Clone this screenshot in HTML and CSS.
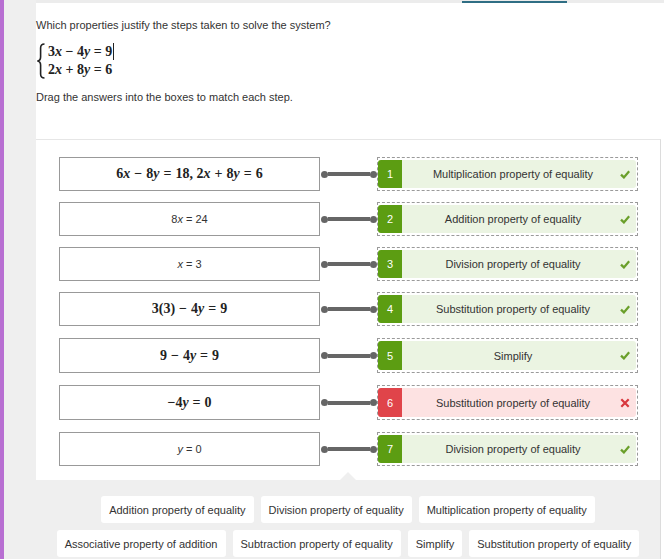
FILE: index.html
```html
<!DOCTYPE html>
<html lang="en">
<head>
<meta charset="utf-8">
<title>Properties</title>
<link rel="stylesheet" href="styles.css">
</head>
<body>
<div class="page">
  <div class="rail"></div>
  <div class="gutter"></div>
  <div class="main">
    <div class="topbar"><div class="tab"></div></div>
    <section class="question">
      <p class="prompt">Which properties justify the steps taken to solve the system?</p>
      <div class="system">
        <svg class="brace" width="10" height="36" viewBox="0 0 10 36"><path d="M8.5 1 C5.5 1 4.6 2.6 4.6 5 L4.6 14 C4.6 16.4 3.6 17.8 1.3 18 C3.6 18.2 4.6 19.6 4.6 22 L4.6 31 C4.6 33.4 5.5 35 8.5 35" fill="none" stroke="#222" stroke-width="1.6"/></svg>
        <div class="system-lines">
          <div>3<i>x</i> − 4<i>y</i> = 9<span class="caret"></span></div>
          <div>2<i>x</i> + 8<i>y</i> = 6</div>
        </div>
      </div>
      <p class="instruction">Drag the answers into the boxes to match each step.</p>
    </section>
    <section class="panel">
      <div class="matches">
        <div class="row">
          <div class="step"><span class="math">6<i>x</i><span class="op">−</span>8<i>y</i><span class="op">=</span>18, 2<i>x</i><span class="op">+</span>8<i>y</i><span class="op">=</span>6</span></div>
          <div class="connector"><span class="dot"></span><span class="wire"></span><span class="dot"></span></div>
          <div class="drop"><div class="card"><span class="num">1</span><span class="label">Multiplication property of equality</span><svg class="mark" width="10" height="9" viewBox="0 0 10 9"><path d="M1 4.6 L3.9 7.4 L9.2 1.2" fill="none" stroke="#6a9f2a" stroke-width="2.3"/></svg></div></div>
        </div>
        <div class="row">
          <div class="step"><span>8<i>x</i> = 24</span></div>
          <div class="connector"><span class="dot"></span><span class="wire"></span><span class="dot"></span></div>
          <div class="drop"><div class="card"><span class="num">2</span><span class="label">Addition property of equality</span><svg class="mark" width="10" height="9" viewBox="0 0 10 9"><path d="M1 4.6 L3.9 7.4 L9.2 1.2" fill="none" stroke="#6a9f2a" stroke-width="2.3"/></svg></div></div>
        </div>
        <div class="row">
          <div class="step"><span><i>x</i> = 3</span></div>
          <div class="connector"><span class="dot"></span><span class="wire"></span><span class="dot"></span></div>
          <div class="drop"><div class="card"><span class="num">3</span><span class="label">Division property of equality</span><svg class="mark" width="10" height="9" viewBox="0 0 10 9"><path d="M1 4.6 L3.9 7.4 L9.2 1.2" fill="none" stroke="#6a9f2a" stroke-width="2.3"/></svg></div></div>
        </div>
        <div class="row">
          <div class="step"><span class="math">3(3)<span class="op">−</span>4<i>y</i><span class="op">=</span>9</span></div>
          <div class="connector"><span class="dot"></span><span class="wire"></span><span class="dot"></span></div>
          <div class="drop"><div class="card"><span class="num">4</span><span class="label">Substitution property of equality</span><svg class="mark" width="10" height="9" viewBox="0 0 10 9"><path d="M1 4.6 L3.9 7.4 L9.2 1.2" fill="none" stroke="#6a9f2a" stroke-width="2.3"/></svg></div></div>
        </div>
        <div class="row row--tall row--loose">
          <div class="step"><span class="math">9<span class="op">−</span>4<i>y</i><span class="op">=</span>9</span></div>
          <div class="connector"><span class="dot"></span><span class="wire"></span><span class="dot"></span></div>
          <div class="drop"><div class="card"><span class="num">5</span><span class="label">Simplify</span><svg class="mark" width="10" height="9" viewBox="0 0 10 9"><path d="M1 4.6 L3.9 7.4 L9.2 1.2" fill="none" stroke="#6a9f2a" stroke-width="2.3"/></svg></div></div>
        </div>
        <div class="row row--tall row--loose">
          <div class="step"><span class="math">−4<i>y</i><span class="op">=</span>0</span></div>
          <div class="connector"><span class="dot"></span><span class="wire"></span><span class="dot"></span></div>
          <div class="drop"><div class="card card--wrong"><span class="num">6</span><span class="label">Substitution property of equality</span><svg class="mark" width="10" height="10" viewBox="0 0 10 10"><path d="M1.3 1.3 L8.7 8.7 M8.7 1.3 L1.3 8.7" fill="none" stroke="#d8373d" stroke-width="2.2"/></svg></div></div>
        </div>
        <div class="row row--loose">
          <div class="step"><span><i>y</i> = 0</span></div>
          <div class="connector"><span class="dot"></span><span class="wire"></span><span class="dot"></span></div>
          <div class="drop"><div class="card"><span class="num">7</span><span class="label">Division property of equality</span><svg class="mark" width="10" height="9" viewBox="0 0 10 9"><path d="M1 4.6 L3.9 7.4 L9.2 1.2" fill="none" stroke="#6a9f2a" stroke-width="2.3"/></svg></div></div>
        </div>
      </div>
      <div class="bank">
        <span class="tile">Addition property of equality</span>
        <span class="tile">Division property of equality</span>
        <span class="tile">Multiplication property of equality</span>
        <span class="tile">Associative property of addition</span>
        <span class="tile">Subtraction property of equality</span>
        <span class="tile">Simplify</span>
        <span class="tile">Substitution property of equality</span>
      </div>
    </section>
  </div>
</div>
</body>
</html>
```
FILE: styles.css
```css
html, body {
  margin: 0;
  padding: 0;
}
body {
  background: #ffffff;
  color: #333333;
  font-family: "Liberation Sans", Arial, sans-serif;
  font-size: 11px;
}
.page {
  display: flex;
  height: 559px;
  overflow: hidden;
}
.rail {
  width: 4px;
  flex-shrink: 0;
  background: #b86fd2;
}
.gutter {
  width: 32px;
  flex-shrink: 0;
  background: #efefef;
}
.main {
  flex: 1;
  display: flex;
  flex-direction: column;
  min-width: 0;
}
.topbar {
  height: 3px;
  flex-shrink: 0;
  display: flex;
  background: #ececec;
}
.tab {
  margin-left: 426px;
  width: 105px;
  height: 2px;
  margin-top: 1px;
  background: #2f6e84;
}
.question {
  height: 136px;
  flex-shrink: 0;
  box-sizing: border-box;
  padding-top: 16px;
}
.prompt {
  margin: 0;
  line-height: 13px;
}
.system {
  display: flex;
  align-items: center;
  margin-top: 11px;
}
.brace {
  margin-right: 2px;
  flex-shrink: 0;
}
.system-lines {
  font-family: "Liberation Serif", "Times New Roman", serif;
  font-weight: bold;
  font-size: 14px;
  line-height: 18px;
  color: #222;
}
.system-lines i, .math i {
  font-style: italic;
}
.caret {
  display: inline-block;
  width: 0;
  height: 17px;
  border-left: 1px solid #222;
  vertical-align: -4px;
  margin-left: 1px;
}
.instruction {
  margin: 12px 0 0;
  line-height: 13px;
}
.panel {
  width: 625px;
  flex: 1;
  box-sizing: border-box;
  border-top: 1px solid #e6e6e6;
  border-right: 1px solid #dcdcdc;
  display: flex;
  flex-direction: column;
}
.matches {
  display: flex;
  flex-direction: column;
  gap: 11px;
  padding: 17px 0 14px 23px;
}
.row {
  display: flex;
  align-items: center;
  height: 34px;
}
.row--tall {
  height: 35px;
}
.row--loose {
  margin-top: 1px;
}
.step {
  width: 261px;
  height: 100%;
  box-sizing: border-box;
  border: 1px solid #999999;
  display: flex;
  align-items: center;
  justify-content: center;
  background: #ffffff;
}
.math {
  font-family: "Liberation Serif", "Times New Roman", serif;
  font-weight: bold;
  font-size: 14px;
  color: #222;
}
.op {
  margin: 0 4px;
}
.connector {
  width: 57px;
  box-sizing: border-box;
  padding-left: 1px;
  display: flex;
  align-items: center;
}
.dot {
  width: 7px;
  height: 7px;
  border-radius: 50%;
  background: #666666;
  flex-shrink: 0;
}
.wire {
  flex: 1;
  height: 4px;
  background: #666666;
}
.drop {
  width: 261px;
  height: 100%;
  box-sizing: border-box;
  border: 1px dashed #9a9a9a;
  padding: 2px 1px 2px 0;
}
.card {
  height: 100%;
  display: flex;
  align-items: center;
  background: #ebf4e2;
  border-radius: 3px;
}
.num {
  width: 24px;
  align-self: stretch;
  display: flex;
  align-items: center;
  justify-content: center;
  background: #5c9d12;
  color: #ffffff;
  border-radius: 3px 0 0 3px;
  flex-shrink: 0;
}
.label {
  flex: 1;
  text-align: center;
  padding-left: 4px;
}
.mark {
  flex-shrink: 0;
  margin-right: 6px;
}
.card--wrong {
  background: #fde2e2;
}
.card--wrong .num {
  background: #e0444a;
}
.bank {
  position: relative;
  flex: 1;
  background: #efefef;
  display: flex;
  flex-wrap: wrap;
  justify-content: center;
  align-content: flex-start;
  gap: 7px;
  padding: 16px 10px 0;
}
.bank::before {
  content: "";
  position: absolute;
  top: -8px;
  left: 304px;
  width: 0;
  height: 0;
  border-left: 8px solid transparent;
  border-right: 8px solid transparent;
  border-bottom: 8px solid #efefef;
}
.tile {
  height: 27px;
  box-sizing: border-box;
  padding: 0 8px;
  background: #ffffff;
  border-radius: 3px;
  display: flex;
  align-items: center;
  white-space: nowrap;
}
```
